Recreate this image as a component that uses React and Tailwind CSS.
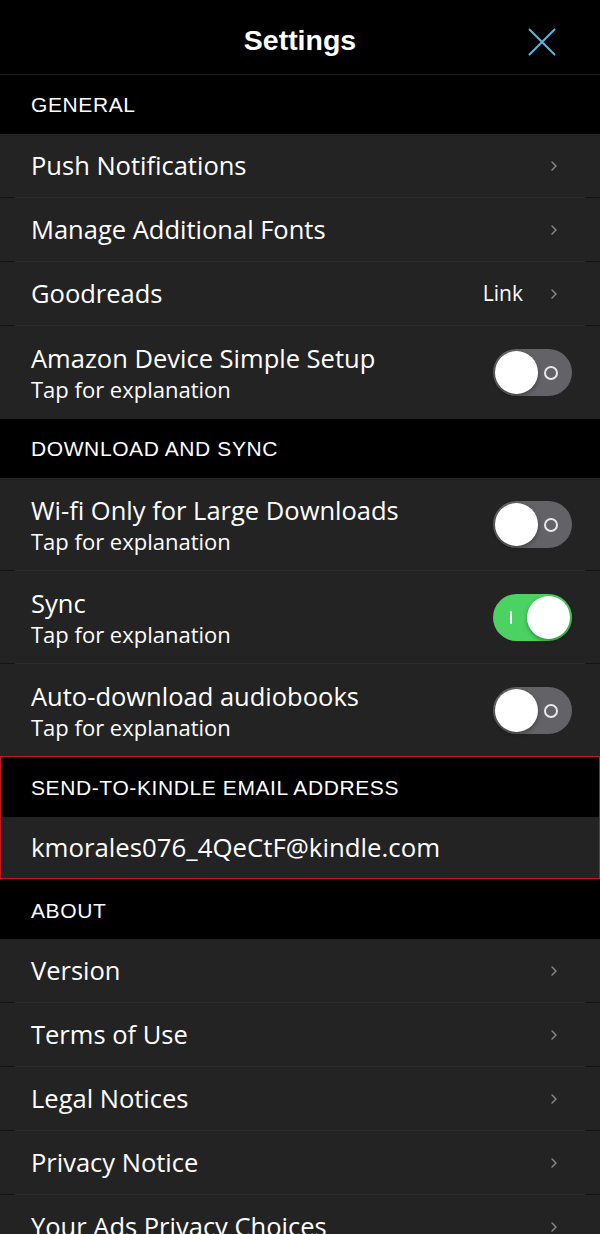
import React, { useState } from "react";

const rowFont = { fontFamily: '"Open Sans", "Noto Sans", sans-serif' };

const SectionHeader = ({ title, tall }) => (
    <div
        className={`${tall ? "h-[60px] pt-[3px]" : "h-[59px] pt-[1px]"} flex items-center bg-black pl-[31px] text-[21px] text-white font-['Liberation_Sans',Arial,sans-serif] tracking-[0.6px]`}
    >
        {title}
    </div>
);

const Separator = () => (
    <div className="h-px bg-[#151515]">
        <div className="mx-[15px] h-full bg-[#2c2c2c]" />
    </div>
);

const Chevron = () => (
    <svg width="8" height="12" viewBox="0 0 8 12" className="mr-[42px]">
        <path d="M2 2 L6 6 L2 10" fill="none" stroke="#8a8a8a" strokeWidth="1.4" strokeLinecap="round" strokeLinejoin="round" />
    </svg>
);

const Toggle = ({ on, onClick }) => (
    <button
        onClick={onClick}
        className={`relative w-[79px] h-[47px] rounded-full mr-[28px] shrink-0 ${on ? "bg-[#4cd262]" : "bg-[#636367]"}`}
    >
        {on ? (
            <span className="absolute left-[17px] top-[17px] w-[2px] h-[13px] bg-white rounded" />
        ) : (
            <span className="absolute right-[14px] top-[17px] w-[14px] h-[14px] rounded-full border-2 border-[#e8e8e8]" />
        )}
        <span
            className={`absolute top-[2px] w-[43px] h-[43px] rounded-full bg-white shadow-[0_2px_4px_rgba(0,0,0,0.35)] ${on ? "left-[34px]" : "left-[2px]"}`}
        />
    </button>
);

const LinkRow = ({ label, value }) => (
    <div className="h-[63px] flex items-center justify-between bg-[#232323]" style={rowFont}>
        <span className="pl-[31px] text-[25.5px] text-white">{label}</span>
        <div className="flex items-center">
            {value && <span className="text-[21px] text-white mr-[27px]">{value}</span>}
            <Chevron />
        </div>
    </div>
);

const ToggleRow = ({ label, on, onToggle, tall }) => (
    <div className={`${tall ? "h-[93px]" : "h-[92px]"} flex items-center justify-between bg-[#232323]`} style={rowFont}>
        <div className="pl-[31px] pt-[1px] flex flex-col">
            <span className="text-[25.5px] text-white leading-[32px]">{label}</span>
            <span className="text-[22px] text-white leading-[30px]">Tap for explanation</span>
        </div>
        <Toggle on={on} onClick={onToggle} />
    </div>
);

export default function App() {
    const [toggles, setToggles] = useState({ setup: false, wifi: false, sync: true, audio: false });
    const flip = (k) => setToggles((p) => ({ ...p, [k]: !p[k] }));

    return (
        <div className="w-[600px] h-[1234px] overflow-hidden bg-black">
            {/* Header */}
            <div className="h-[75px] relative flex items-center justify-center pt-[7px] bg-black border-b border-[#1c1c1c]">
                <span className="text-[28.5px] font-bold text-white font-['Liberation_Sans',Arial,sans-serif]">Settings</span>
                <button className="absolute right-[43px] top-[27px]">
                    <svg width="30" height="30" viewBox="0 0 30 30">
                        <path d="M2 2 L28 28 M28 2 L2 28" stroke="#5ab6e2" strokeWidth="2" fill="none" />
                    </svg>
                </button>
            </div>

            <SectionHeader title="GENERAL" />
            <LinkRow label="Push Notifications" />
            <Separator />
            <LinkRow label="Manage Additional Fonts" />
            <Separator />
            <LinkRow label="Goodreads" value="Link" />
            <Separator />
            <ToggleRow tall label="Amazon Device Simple Setup" on={toggles.setup} onToggle={() => flip("setup")} />

            <SectionHeader title="DOWNLOAD AND SYNC" />
            <ToggleRow label="Wi-fi Only for Large Downloads" on={toggles.wifi} onToggle={() => flip("wifi")} />
            <Separator />
            <ToggleRow label="Sync" on={toggles.sync} onToggle={() => flip("sync")} />
            <Separator />
            <ToggleRow label="Auto-download audiobooks" on={toggles.audio} onToggle={() => flip("audio")} />

            {/* Send-to-Kindle */}
            <div className="border border-[#c4161c]">
                <div className="h-[60px] flex items-center bg-black pl-[30px] pt-[1px] text-[21px] text-white font-['Liberation_Sans',Arial,sans-serif] tracking-[0.6px]">
                    SEND-TO-KINDLE EMAIL ADDRESS
                </div>
                <div className="h-[61px] flex items-center bg-[#232323] pl-[30px] text-[25.8px] text-white" style={rowFont}>
                    kmorales076_4QeCtF@kindle.com
                </div>
            </div>

            <SectionHeader tall title="ABOUT" />
            <LinkRow label="Version" />
            <Separator />
            <LinkRow label="Terms of Use" />
            <Separator />
            <LinkRow label="Legal Notices" />
            <Separator />
            <LinkRow label="Privacy Notice" />
            <Separator />
            <LinkRow label="Your Ads Privacy Choices" />
        </div>
    );
}
